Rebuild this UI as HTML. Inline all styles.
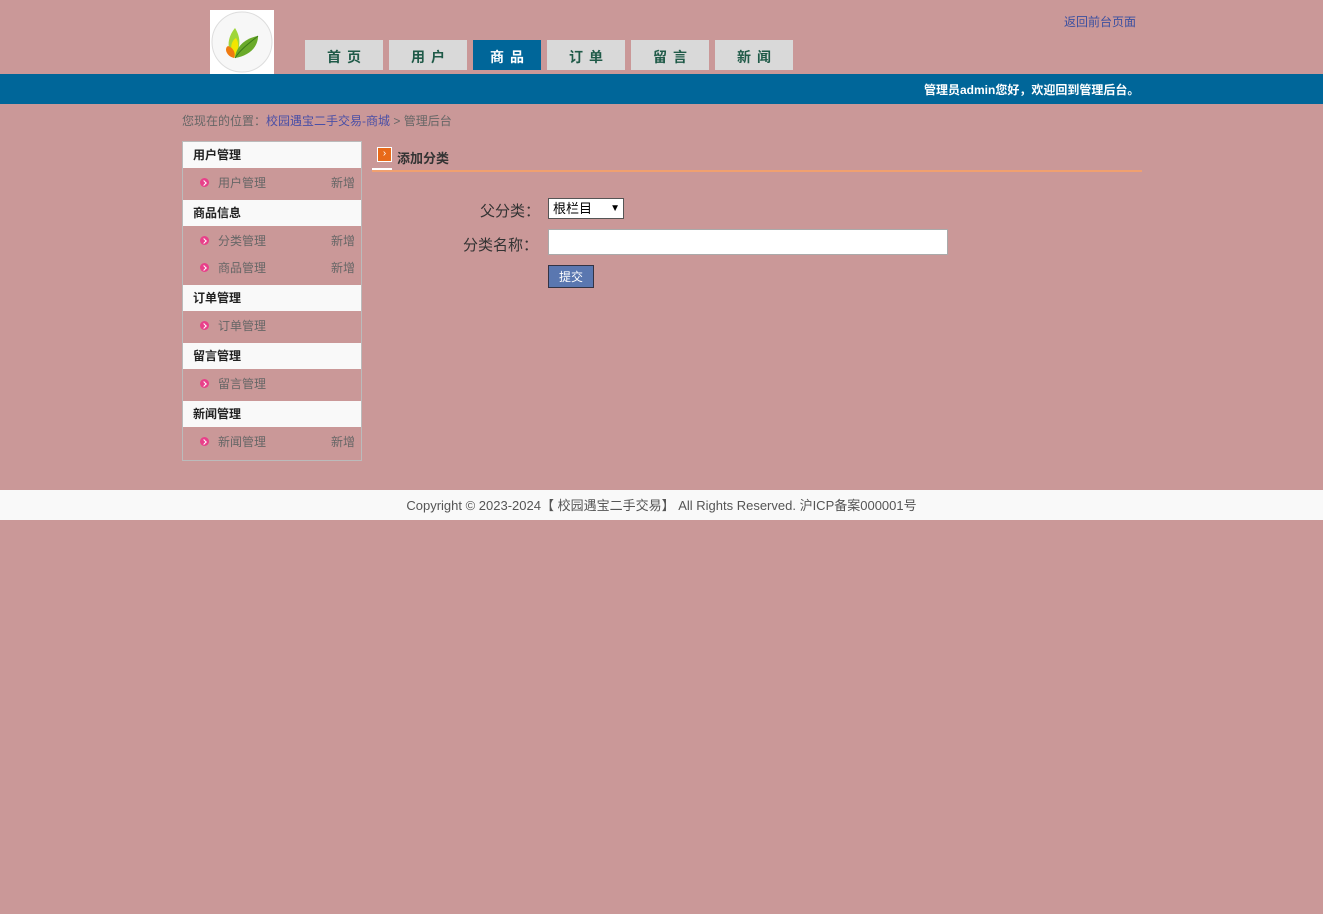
<!DOCTYPE html>
<html><head><meta charset="utf-8"><style>
body{margin:0;width:1323px;height:914px;background:#ca9898;font-family:"Liberation Sans","Noto Sans CJK SC",sans-serif;font-size:12px;color:#555;position:relative;overflow:hidden}
.a{position:absolute}
.tab{position:absolute;top:40px;height:30px;width:78px;background:#d9d9d9;color:#1f5a48;font-weight:bold;font-size:14px;text-align:center;line-height:34px;letter-spacing:6px;text-indent:6px}
.tab.on{background:#006699;color:#fff;width:68px}
.hd{position:absolute;left:183px;width:178px;height:26px;background:#f9f9f9;color:#222;font-weight:bold;font-size:12px;line-height:26px;text-indent:10px}
.it{position:absolute;left:183px;width:178px;height:26px;line-height:26px;color:#666;font-size:12px}
.it i{position:absolute;left:17px;top:8px;width:9px;height:9px;border-radius:50%;background:#e8408a}
.it i:after{content:"";position:absolute;left:2px;top:2.5px;width:3px;height:3px;border-right:1.3px solid #fff;border-top:1.3px solid #fff;transform:rotate(45deg)}
.it span{position:absolute;left:35px}
.it b{position:absolute;right:6px;font-weight:normal}
</style></head><body>
<div class="a" style="left:210px;top:10px;width:64px;height:64px;background:#fff">
<svg width="64" height="64"><circle cx="32" cy="32" r="30" fill="#f7f7f7" stroke="#ddd"/>
<path d="M24 48 C14 36 20 24 25 18 C30 26 32 36 24 48Z" fill="#9fd63a"/>
<path d="M24 48 C20 40 20 32 26 28 C30 34 28 42 24 48Z" fill="#f2e600"/>
<path d="M24 48 C16 46 14 38 18 36 C24 38 26 44 24 48Z" fill="#f07a10"/>
<path d="M25 48 C26 36 36 28 48 26 C48 38 38 46 25 48Z" fill="#6aaa2a"/>
<path d="M25 48 C30 40 38 34 48 26" stroke="#3d7a18" fill="none"/>
</svg></div>
<div class="tab" style="left:305px">首页</div>
<div class="tab" style="left:389px">用户</div>
<div class="tab on" style="left:473px">商品</div>
<div class="tab" style="left:547px">订单</div>
<div class="tab" style="left:631px">留言</div>
<div class="tab" style="left:715px">新闻</div>
<div class="a" style="left:1064px;top:13px;color:#3a4fa0">返回前台页面</div>
<div class="a" style="left:0;top:74px;width:1323px;height:30px;background:#006699"></div>
<div class="a" style="left:924px;top:81px;color:#fff;font-weight:bold">管理员admin您好，欢迎回到管理后台。</div>
<div class="a" style="left:182px;top:112px;color:#666">您现在的位置：<span style="color:#4a4fa6">校园遇宝二手交易-商城</span> &gt; 管理后台</div>
<div class="a" style="left:182px;top:141px;width:178px;height:318px;border:1px solid #bbb"></div>
<div class="hd" style="top:142px">用户管理</div>
<div class="it" style="top:170px"><i></i><span>用户管理</span><b>新增</b></div>
<div class="hd" style="top:200px">商品信息</div>
<div class="it" style="top:228px"><i></i><span>分类管理</span><b>新增</b></div>
<div class="it" style="top:255px"><i></i><span>商品管理</span><b>新增</b></div>
<div class="hd" style="top:285px">订单管理</div>
<div class="it" style="top:313px"><i></i><span>订单管理</span></div>
<div class="hd" style="top:343px">留言管理</div>
<div class="it" style="top:371px"><i></i><span>留言管理</span></div>
<div class="hd" style="top:401px">新闻管理</div>
<div class="it" style="top:429px"><i></i><span>新闻管理</span><b>新增</b></div>
<div class="a" style="left:377px;top:147px;width:13px;height:13px;background:#e86a1a;border:1px solid #fff;color:#fff;font-size:10px;line-height:12px;text-align:center">›</div>
<div class="a" style="left:397px;top:148px;font-weight:bold;font-size:13px;color:#333">添加分类</div>
<div class="a" style="left:372px;top:170px;width:770px;height:2px;background:#f0a070"></div>
<div class="a" style="left:372px;top:168px;width:20px;height:2px;background:#fff"></div>
<div class="a" style="left:480px;top:200px;font-size:15px;color:#333">父分类：</div>
<div class="a" style="left:548px;top:198px;width:74px;height:19px;background:#fff;border:1px solid #555;font-size:13px;color:#000;line-height:19px;text-indent:4px">根栏目 <span style="position:absolute;right:3px;font-size:10px">▼</span></div>
<div class="a" style="left:463px;top:234px;font-size:15px;color:#333">分类名称：</div>
<div class="a" style="left:548px;top:229px;width:398px;height:24px;background:#fff;border:1px solid #aaa"></div>
<div class="a" style="left:548px;top:265px;width:44px;height:21px;background:#5a77b0;border:1px solid #334;color:#fff;font-size:12px;line-height:22px;text-align:center">提交</div>
<div class="a" style="left:0;top:490px;width:1323px;height:30px;background:#f9f9f9;text-align:center;line-height:31px;color:#555;font-size:13px">Copyright © 2023-2024【 校园遇宝二手交易】 All Rights Reserved. 沪ICP备案000001号</div>
</body></html>
